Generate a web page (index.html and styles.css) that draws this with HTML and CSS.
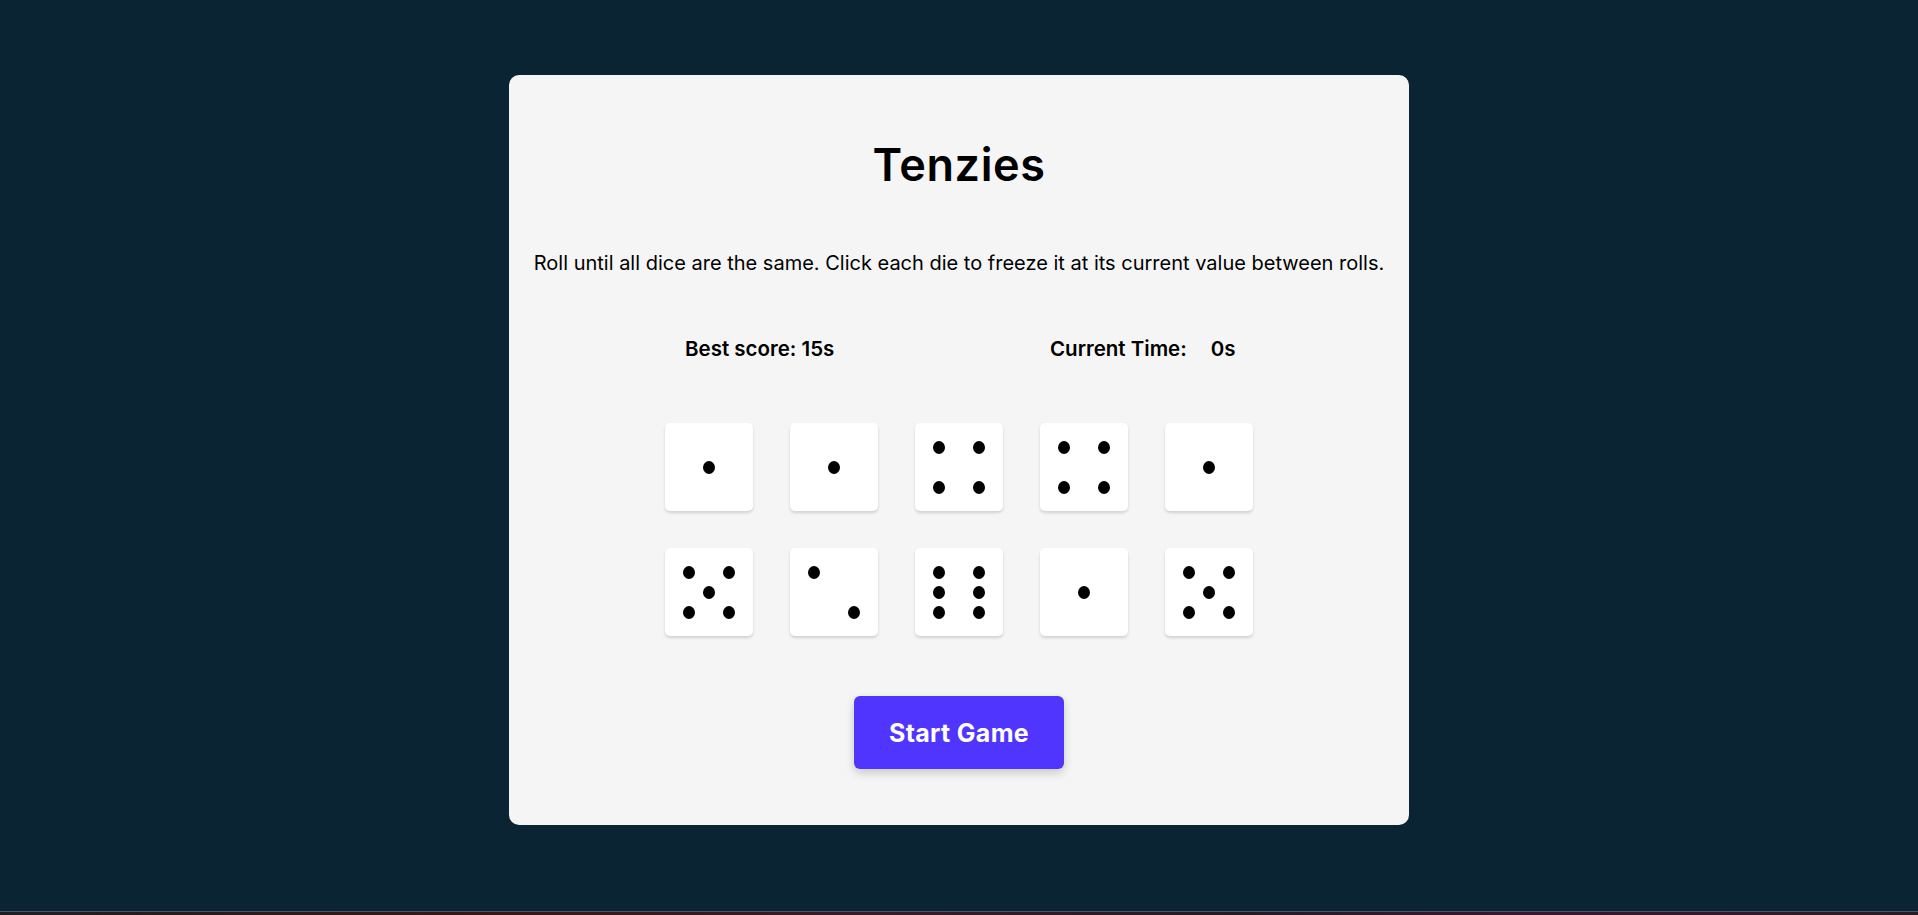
FILE: index.html
```html
<!DOCTYPE html>
<html lang="en">
<head>
<meta charset="utf-8">
<title>Tenzies</title>
<link rel="stylesheet" href="styles.css">
</head>
<body>
<div class="page">
  <main class="card">
    <h1 class="title">Tenzies</h1>
    <p class="instructions">Roll until all dice are the same. Click each die to freeze it at its current value between rolls.</p>
    <div class="stats">
      <span class="stat stat-best">Best score: 15s</span>
      <span class="stat">Current Time:<span class="gap"></span>0s</span>
    </div>
    <div class="dice">
      <div class="die"><span class="dot c5"></span></div>
      <div class="die"><span class="dot c5"></span></div>
      <div class="die"><span class="dot c1"></span><span class="dot c3"></span><span class="dot c7"></span><span class="dot c9"></span></div>
      <div class="die"><span class="dot c1"></span><span class="dot c3"></span><span class="dot c7"></span><span class="dot c9"></span></div>
      <div class="die"><span class="dot c5"></span></div>
      <div class="die"><span class="dot c1"></span><span class="dot c3"></span><span class="dot c5"></span><span class="dot c7"></span><span class="dot c9"></span></div>
      <div class="die"><span class="dot c1"></span><span class="dot c9"></span></div>
      <div class="die"><span class="dot c1"></span><span class="dot c3"></span><span class="dot c4"></span><span class="dot c6"></span><span class="dot c7"></span><span class="dot c9"></span></div>
      <div class="die"><span class="dot c5"></span></div>
      <div class="die"><span class="dot c1"></span><span class="dot c3"></span><span class="dot c5"></span><span class="dot c7"></span><span class="dot c9"></span></div>
    </div>
    <button class="roll-btn">Start Game</button>
  </main>
</div>
<div class="strip"></div>
</body>
</html>
```

FILE: styles.css
```css
* { box-sizing: border-box; }

html, body {
  margin: 0;
  height: 100%;
}

body {
  background: #0B2434;
  display: flex;
  flex-direction: column;
  font-family: Inter, "Noto Sans", sans-serif;
  color: #000;
}

.page {
  flex: 1;
  display: flex;
  justify-content: center;
  align-items: flex-start;
  padding-top: 75px;
}

.card {
  width: 900px;
  height: 750px;
  background: #F5F5F5;
  border-radius: 10px;
  display: flex;
  flex-direction: column;
  align-items: center;
}

.title {
  margin: 62px 0 0;
  font-size: 45px;
  font-weight: 600;
  letter-spacing: 0.6px;
  line-height: 56px;
}

.instructions {
  margin: 58px 0 0;
  font-size: 20px;
  line-height: 24px;
  font-weight: 400;
  color: #000;
}

.stats {
  margin-top: 62px;
  display: flex;
  width: 900px;
  padding-left: 176px;
}

.stat {
  font-size: 20.5px;
  font-weight: 600;
  line-height: 24px;
  white-space: nowrap;
}

.stat-best {
  width: 365px;
}

.gap {
  display: inline-block;
  width: 24px;
}

.dice {
  margin-top: 62px;
  display: grid;
  grid-template-columns: repeat(5, 88px);
  grid-auto-rows: 88px;
  column-gap: 37px;
  row-gap: 37px;
}

.die {
  background: #fff;
  border-radius: 5px;
  box-shadow: 0 2px 3px rgba(0, 0, 0, 0.15);
  display: grid;
  grid-template-columns: repeat(3, 20px);
  grid-template-rows: repeat(3, 20px);
  place-content: center;
}

.dot {
  width: 12px;
  height: 13px;
  border-radius: 50%;
  background: #000;
  justify-self: center;
  align-self: center;
}

.c1 { grid-area: 1 / 1; }
.c3 { grid-area: 1 / 3; }
.c4 { grid-area: 2 / 1; }
.c5 { grid-area: 2 / 2; }
.c6 { grid-area: 2 / 3; }
.c7 { grid-area: 3 / 1; }
.c9 { grid-area: 3 / 3; }

.roll-btn {
  margin-top: 60px;
  width: 210px;
  height: 73px;
  border: none;
  border-radius: 6px;
  background: #5035FF;
  color: #fff;
  font-family: Inter, "Noto Sans", sans-serif;
  font-size: 25px;
  font-weight: 700;
  letter-spacing: 0.3px;
  box-shadow: 0 4px 10px rgba(0, 0, 0, 0.18);
  cursor: pointer;
}

.strip {
  height: 4px;
  border-top: 1px solid #4a5560;
  background: linear-gradient(90deg, #1e1e22 0%, #3a1515 25%, #3a1a28 45%, #241a24 65%, #3d1530 80%, #2a1a22 100%);
}
```
